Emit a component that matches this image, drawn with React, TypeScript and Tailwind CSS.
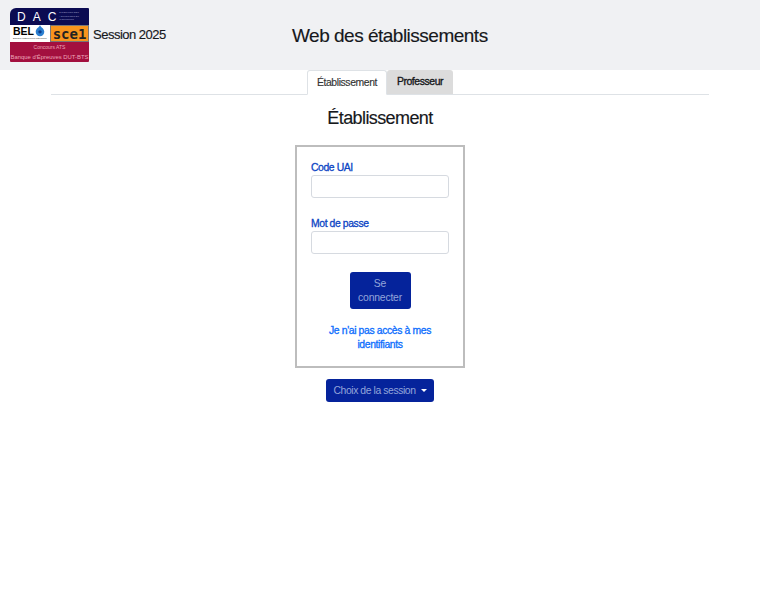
export default function App() {
  return (
    <div className="min-h-[600px] bg-white font-['Liberation_Sans',Arial,sans-serif] text-[#16181b]">
      <header className="h-[70px] bg-[#f0f1f3] flex items-start">
        <div className="ml-[10px] mt-[8px] w-[79px] h-[54px] flex flex-col overflow-hidden rounded-[1px] shrink-0">
          <div className="h-[17px] bg-[#0b0b52] flex items-center text-white text-[12px] leading-none relative pl-[7px] gap-[7px] rounded-tl-[6px]">
            <span>D</span>
            <span>A</span>
            <span>C</span>
            <span className="w-[27px] text-[2.5px] leading-[3.5px] text-[#9a9ac0] -ml-[4px]">DIRECTION DES ADMISSIONS ET CONCOURS</span>
          </div>
          <div className="h-[17px] bg-white flex">
            <div className="w-[40px] flex flex-col items-start pl-[3px] relative">
              <span className="text-[10.5px] leading-[12px] font-bold text-black">BEL</span>
              <span className="text-[2.5px] leading-[3px] text-[#333] whitespace-nowrap">Banque d'Épreuves Littéraires</span>
              <svg viewBox="0 0 14 14" className="absolute left-[24px] top-[0px] w-[12px] h-[12px]">
                <path d="M7 0 C8 3 12 4 12 8 A5 5 0 0 1 2 8 C2 4 6 3 7 0Z" fill="#2a7fd0" />
                <circle cx="7" cy="8" r="2" fill="#0b3a8a" />
              </svg>
            </div>
            <div className="w-[39px] h-[17px] border-[1.5px] border-[#777] bg-[#f7941d] flex items-center justify-center text-[14px] font-bold font-['DejaVu_Sans_Mono',monospace] leading-none text-[#222]">sce1</div>
          </div>
          <div className="flex-1 bg-[#a3103f] flex flex-col items-center justify-center text-[#eda6b8]">
            <span className="text-[5px] leading-[10px] whitespace-nowrap">Concours ATS</span>
            <span className="text-[5.9px] leading-[10px] whitespace-nowrap">Banque d'Épreuves DUT-BTS</span>
          </div>
        </div>
        <div className="ml-[4px] mt-[26px] text-[13px] leading-[17px] tracking-[-0.5px] w-[199px] shrink-0 [-webkit-text-stroke:0.15px]">Session 2025</div>
        <h1 className="mt-[24px] text-[19px] leading-[23px] tracking-[-0.5px] [-webkit-text-stroke:0.15px]">Web des établissements</h1>
      </header>

      <nav className="mx-[51px] h-[24px] border-b border-[#dee2e6] flex justify-center box-content">
        <div className="h-[25px] w-[80px] bg-white border border-[#dee2e6] border-b-white rounded-t-[3px] flex items-center justify-center text-[10.4px] tracking-[-0.4px] text-[#333] [-webkit-text-stroke:0.15px]">Établissement</div>
        <div className="h-[24px] w-[66px] bg-[#dcdcdc] rounded-t-[3px] flex items-center justify-center text-[10.4px] tracking-[-0.4px] text-[#16181b] [-webkit-text-stroke:0.35px]">Professeur</div>
      </nav>

      <h2 className="mt-[12px] text-center text-[18px] leading-[22px] tracking-[-0.6px] [-webkit-text-stroke:0.15px]">Établissement</h2>

      <main className="flex flex-col items-center">
        <form className="mt-[16px] w-[170px] h-[223px] border-2 border-[#bdbdbd] px-[14px] pt-[14px] flex flex-col">
          <label className="text-[10.4px] tracking-[-0.4px] leading-[14px] text-[#0b44c4] [-webkit-text-stroke:0.3px]">Code UAI</label>
          <input type="text" className="h-[23px] w-full bg-white border-[1.5px] border-[#d6dae0] rounded-[3px] outline-none" />
          <label className="mt-[19px] text-[10.4px] tracking-[-0.4px] leading-[14px] text-[#0b44c4] [-webkit-text-stroke:0.3px]">Mot de passe</label>
          <input type="password" className="h-[23px] w-full bg-white border-[1.5px] border-[#d6dae0] rounded-[3px] outline-none" />
          <button type="button" className="self-center mt-[18px] w-[61px] h-[37px] bg-[#05239b] rounded-[3px] text-[#93a5da] text-[10.4px] tracking-[-0.2px] leading-[14px] px-[8px]">Se connecter</button>
          <a className="mt-[15px] text-center text-[#0d6efd] text-[10.4px] tracking-[-0.37px] leading-[14px] block [-webkit-text-stroke:0.3px]">Je n'ai pas accès à mes identifiants</a>
        </form>
        <button type="button" className="mt-[11px] w-[108px] h-[23px] bg-[#05239b] rounded-[3px] text-[#93a5da] text-[10.4px] tracking-[-0.42px] flex items-center justify-center">
          Choix de la session
          <span className="ml-[5px] inline-block border-x-[3px] border-x-transparent border-t-[3px] border-t-white"></span>
        </button>
      </main>
    </div>
  );
}
